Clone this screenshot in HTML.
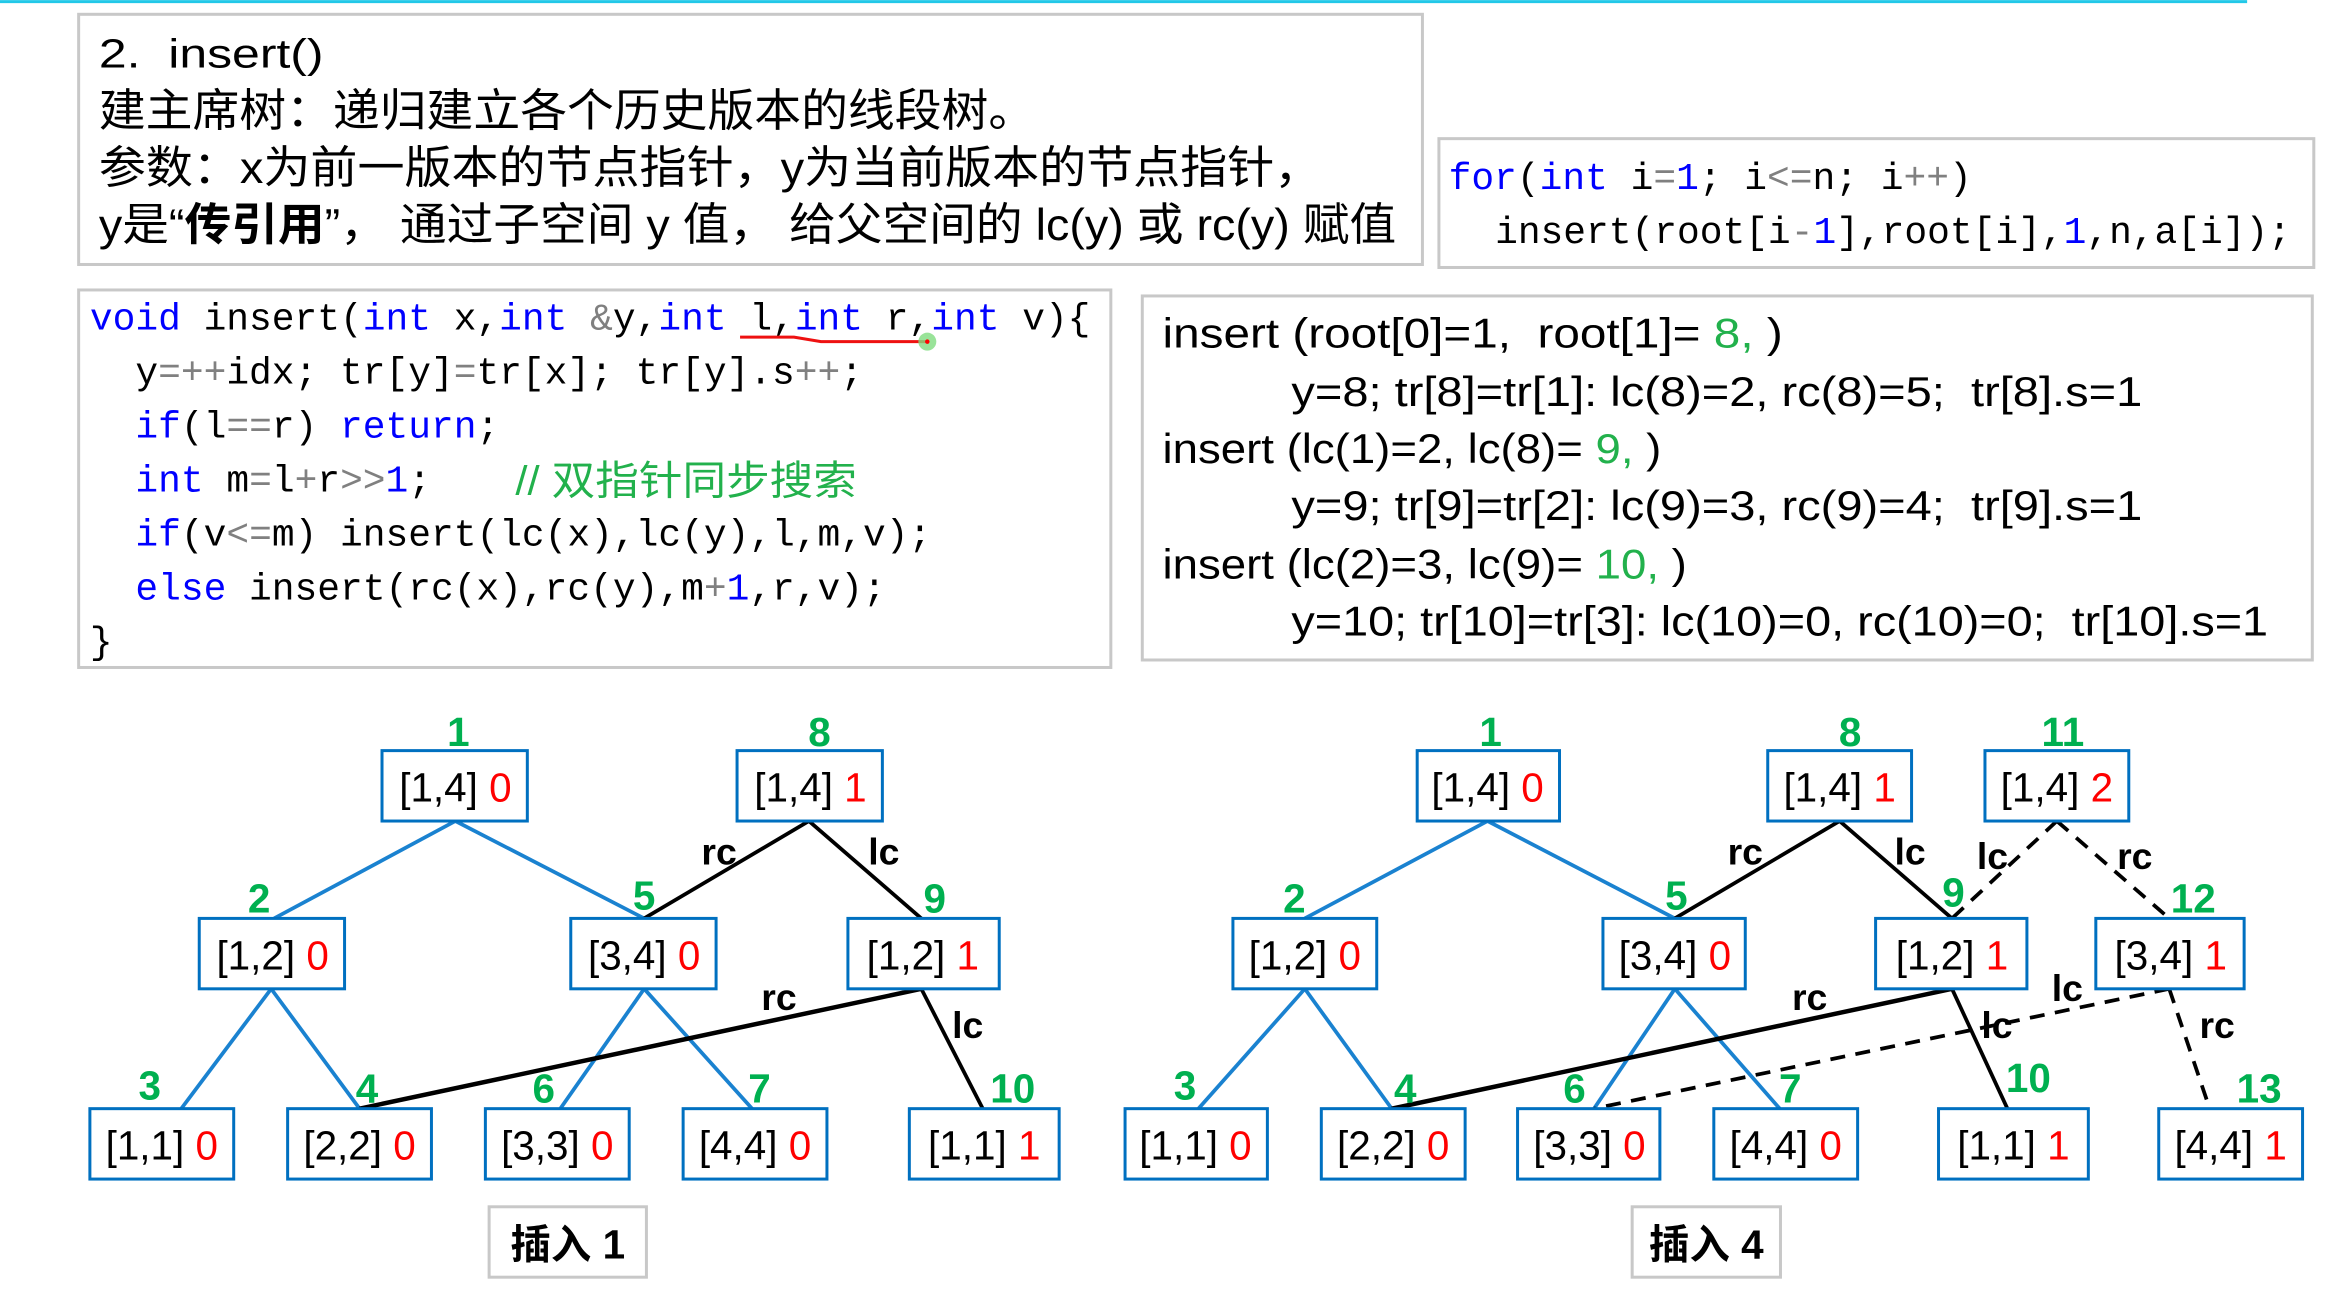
<!DOCTYPE html>
<html><head><meta charset="utf-8"><style>
html,body{margin:0;padding:0;background:#fff;}
svg{display:block;}
text{white-space:pre;}
.s{font-family:"Liberation Sans","Noto Sans CJK SC",sans-serif;}
.m{font-family:"Liberation Mono","DejaVu Sans Mono",monospace;font-size:25.3px;}
.k{fill:#0000ff}.o{fill:#808080}.c{fill:#22b14c}
.bx{fill:#fff;stroke:#0070c0;stroke-width:2}
.nt{font-family:"Liberation Sans",sans-serif;font-size:27px;text-anchor:middle;}
.g{font-family:"Liberation Sans",sans-serif;font-size:27px;fill:#00b050;text-anchor:middle;font-weight:bold}
.lb{font-family:"Liberation Sans",sans-serif;font-size:25px;fill:#000;text-anchor:middle;font-weight:bold}
.r{fill:#ff0000}
</style></head><body>
<svg width="2349" height="1296" viewBox="0 0 1568 865" xmlns="http://www.w3.org/2000/svg">
<rect x="0" y="0" width="1568" height="865" fill="#fff"/>
<line x1="0" y1="1" x2="1500" y2="1" stroke="#22c8e8" stroke-width="2"/>

<!-- box 1 -->
<rect x="52.5" y="9.5" width="897" height="167" fill="#fff" stroke="#c8c8c8" stroke-width="2"/>
<text class="s" x="66" y="45" font-size="27" textLength="150" lengthAdjust="spacingAndGlyphs">2.  insert()</text>
<text class="s" x="66" y="84" font-size="30" textLength="625" lengthAdjust="spacingAndGlyphs">建主席树：递归建立各个历史版本的线段树。</text>
<text class="s" x="66" y="122" font-size="30" textLength="816" lengthAdjust="spacingAndGlyphs">参数：x为前一版本的节点指针，y为当前版本的节点指针，</text>
<text class="s" x="66" y="160" font-size="30" textLength="866" lengthAdjust="spacingAndGlyphs">y是“<tspan font-weight="bold">传引用</tspan>”， 通过子空间 y 值， 给父空间的 lc(y) 或 rc(y) 赋值</text>

<!-- for box -->
<rect x="960.5" y="92.5" width="584" height="86" fill="#fff" stroke="#c8c8c8" stroke-width="2"/>
<text class="m" x="967" y="126"><tspan class="k">for</tspan>(<tspan class="k">int</tspan> i<tspan class="o">=</tspan><tspan class="k">1</tspan>; i<tspan class="o">&lt;=</tspan>n; i<tspan class="o">++</tspan>)</text>
<text class="m" x="998" y="162">insert(root[i<tspan class="o">-</tspan><tspan class="k">1</tspan>],root[i],<tspan class="k">1</tspan>,n,a[i]);</text>

<!-- code box -->
<rect x="52.5" y="193.5" width="689" height="252" fill="#fff" stroke="#c8c8c8" stroke-width="2"/>
<text class="m" x="60" y="220"><tspan class="k">void</tspan> insert(<tspan class="k">int</tspan> x,<tspan class="k">int</tspan> <tspan class="o">&amp;</tspan>y,<tspan class="k">int</tspan> l,<tspan class="k">int</tspan> r,<tspan class="k">int</tspan> v){</text>
<text class="m" x="60" y="256">  y<tspan class="o">=++</tspan>idx; tr[y]<tspan class="o">=</tspan>tr[x]; tr[y].s<tspan class="o">++</tspan>;</text>
<text class="m" x="60" y="292">  <tspan class="k">if</tspan>(l<tspan class="o">==</tspan>r) <tspan class="k">return</tspan>;</text>
<text class="m" x="60" y="328">  <tspan class="k">int</tspan> m<tspan class="o">=</tspan>l<tspan class="o">+</tspan>r<tspan class="o">&gt;&gt;</tspan><tspan class="k">1</tspan>;    </text>
<text class="s c" x="344" y="330" font-size="27" textLength="228" lengthAdjust="spacingAndGlyphs">// 双指针同步搜索</text>
<text class="m" x="60" y="364">  <tspan class="k">if</tspan>(v<tspan class="o">&lt;=</tspan>m) insert(lc(x),lc(y),l,m,v);</text>
<text class="m" x="60" y="400">  <tspan class="k">else</tspan> insert(rc(x),rc(y),m<tspan class="o">+</tspan><tspan class="k">1</tspan>,r,v);</text>
<text class="m" x="60" y="436">}</text>
<path d="M494 225 L530 225 L548 228 L618 228" stroke="#ee1111" stroke-width="2" fill="none"/>
<circle cx="619" cy="228" r="6" fill="#7fdc7f" opacity="0.8"/>
<circle cx="619" cy="228" r="1.5" fill="#f00"/>

<!-- right explanation box -->
<rect x="762.5" y="197.5" width="781" height="243" fill="#fff" stroke="#c8c8c8" stroke-width="2"/>
<g class="s" font-size="28">
<text x="776" y="232" textLength="414" lengthAdjust="spacingAndGlyphs">insert (root[0]=1,  root[1]= <tspan class="c">8, </tspan>)</text>
<text x="862" y="271" textLength="568" lengthAdjust="spacingAndGlyphs">y=8; tr[8]=tr[1]: lc(8)=2, rc(8)=5;  tr[8].s=1</text>
<text x="776" y="309" textLength="333" lengthAdjust="spacingAndGlyphs">insert (lc(1)=2, lc(8)= <tspan class="c">9, </tspan>)</text>
<text x="862" y="347" textLength="568" lengthAdjust="spacingAndGlyphs">y=9; tr[9]=tr[2]: lc(9)=3, rc(9)=4;  tr[9].s=1</text>
<text x="776" y="386" textLength="350" lengthAdjust="spacingAndGlyphs">insert (lc(2)=3, lc(9)= <tspan class="c">10, </tspan>)</text>
<text x="862" y="424" textLength="652" lengthAdjust="spacingAndGlyphs">y=10; tr[10]=tr[3]: lc(10)=0, rc(10)=0;  tr[10].s=1</text>
</g>

<!-- LEFT TREE edges -->
<g stroke="#1a82d0" stroke-width="2.5" fill="none">
<line x1="304" y1="548" x2="183" y2="613"/><line x1="304" y1="548" x2="430" y2="613"/>
<line x1="181" y1="660" x2="121" y2="740"/><line x1="181" y1="660" x2="240" y2="740"/>
<line x1="430" y1="660" x2="374" y2="740"/><line x1="430" y1="660" x2="502" y2="740"/>
</g>
<g stroke="#000" stroke-width="2.5" fill="none">
<line x1="540" y1="548" x2="430" y2="613"/><line x1="540" y1="548" x2="615" y2="613"/>
<line x1="615" y1="660" x2="240" y2="740" stroke-width="3"/><line x1="615" y1="660" x2="656" y2="740"/>
</g>
<text class="lb" x="480" y="577">rc</text><text class="lb" x="590" y="577">lc</text>
<text class="lb" x="520" y="674">rc</text><text class="lb" x="646" y="693">lc</text>

<!-- left tree nodes -->
<g>
<rect class="bx" x="255" y="501" width="97" height="47"/><text class="nt" x="304" y="535">[1,4] <tspan class="r">0</tspan></text>
<rect class="bx" x="492" y="501" width="97" height="47"/><text class="nt" x="541" y="535">[1,4] <tspan class="r">1</tspan></text>
<rect class="bx" x="133" y="613" width="97" height="47"/><text class="nt" x="182" y="647">[1,2] <tspan class="r">0</tspan></text>
<rect class="bx" x="381" y="613" width="97" height="47"/><text class="nt" x="430" y="647">[3,4] <tspan class="r">0</tspan></text>
<rect class="bx" x="566" y="613" width="101" height="47"/><text class="nt" x="616" y="647">[1,2] <tspan class="r">1</tspan></text>
<rect class="bx" x="60" y="740" width="96" height="47"/><text class="nt" x="108" y="774">[1,1] <tspan class="r">0</tspan></text>
<rect class="bx" x="192" y="740" width="96" height="47"/><text class="nt" x="240" y="774">[2,2] <tspan class="r">0</tspan></text>
<rect class="bx" x="324" y="740" width="96" height="47"/><text class="nt" x="372" y="774">[3,3] <tspan class="r">0</tspan></text>
<rect class="bx" x="456" y="740" width="96" height="47"/><text class="nt" x="504" y="774">[4,4] <tspan class="r">0</tspan></text>
<rect class="bx" x="607" y="740" width="100" height="47"/><text class="nt" x="657" y="774">[1,1] <tspan class="r">1</tspan></text>
</g>
<g class="g">
<text x="306" y="498">1</text><text x="547" y="498">8</text>
<text x="173" y="609">2</text><text x="430" y="607">5</text><text x="624" y="609">9</text>
<text x="100" y="734">3</text><text x="245" y="736">4</text><text x="363" y="736">6</text><text x="507" y="736">7</text><text x="676" y="736">10</text>
</g>
<rect x="326.5" y="805.5" width="105" height="47" fill="#fff" stroke="#c8c8c8" stroke-width="2"/>
<text class="s" x="379" y="840" font-size="27" font-weight="bold" text-anchor="middle">插入 1</text>

<!-- RIGHT TREE edges -->
<g stroke="#1a82d0" stroke-width="2.5" fill="none">
<line x1="993" y1="548" x2="871" y2="613"/><line x1="993" y1="548" x2="1118" y2="613"/>
<line x1="871" y1="660" x2="800" y2="740"/><line x1="871" y1="660" x2="929" y2="740"/>
<line x1="1118" y1="660" x2="1064" y2="740"/><line x1="1118" y1="660" x2="1188" y2="740"/>
</g>
<g stroke="#000" stroke-width="2.5" fill="none">
<line x1="1228" y1="548" x2="1118" y2="613"/><line x1="1228" y1="548" x2="1303" y2="613"/>
<line x1="1303" y1="660" x2="929" y2="740" stroke-width="3"/><line x1="1303" y1="660" x2="1340" y2="740"/>
</g>
<g stroke="#000" stroke-width="2.5" fill="none" stroke-dasharray="10,7">
<line x1="1373" y1="548" x2="1303" y2="613"/><line x1="1373" y1="548" x2="1448" y2="613"/>
<line x1="1448" y1="660" x2="1064" y2="740"/><line x1="1448" y1="660" x2="1475" y2="740"/>
</g>
<text class="lb" x="1165" y="577">rc</text><text class="lb" x="1275" y="577">lc</text>
<text class="lb" x="1330" y="580">lc</text><text class="lb" x="1425" y="580">rc</text>
<text class="lb" x="1208" y="674">rc</text><text class="lb" x="1380" y="668">lc</text>
<text class="lb" x="1333" y="693">lc</text><text class="lb" x="1480" y="693">rc</text>

<g>
<rect class="bx" x="946" y="501" width="95" height="47"/><text class="nt" x="993" y="535">[1,4] <tspan class="r">0</tspan></text>
<rect class="bx" x="1180" y="501" width="96" height="47"/><text class="nt" x="1228" y="535">[1,4] <tspan class="r">1</tspan></text>
<rect class="bx" x="1325" y="501" width="96" height="47"/><text class="nt" x="1373" y="535">[1,4] <tspan class="r">2</tspan></text>
<rect class="bx" x="823" y="613" width="96" height="47"/><text class="nt" x="871" y="647">[1,2] <tspan class="r">0</tspan></text>
<rect class="bx" x="1070" y="613" width="95" height="47"/><text class="nt" x="1118" y="647">[3,4] <tspan class="r">0</tspan></text>
<rect class="bx" x="1252" y="613" width="101" height="47"/><text class="nt" x="1303" y="647">[1,2] <tspan class="r">1</tspan></text>
<rect class="bx" x="1399" y="613" width="99" height="47"/><text class="nt" x="1449" y="647">[3,4] <tspan class="r">1</tspan></text>
<rect class="bx" x="751" y="740" width="95" height="47"/><text class="nt" x="798" y="774">[1,1] <tspan class="r">0</tspan></text>
<rect class="bx" x="882" y="740" width="96" height="47"/><text class="nt" x="930" y="774">[2,2] <tspan class="r">0</tspan></text>
<rect class="bx" x="1013" y="740" width="95" height="47"/><text class="nt" x="1061" y="774">[3,3] <tspan class="r">0</tspan></text>
<rect class="bx" x="1144" y="740" width="96" height="47"/><text class="nt" x="1192" y="774">[4,4] <tspan class="r">0</tspan></text>
<rect class="bx" x="1294" y="740" width="100" height="47"/><text class="nt" x="1344" y="774">[1,1] <tspan class="r">1</tspan></text>
<rect class="bx" x="1441" y="740" width="96" height="47"/><text class="nt" x="1489" y="774">[4,4] <tspan class="r">1</tspan></text>
</g>
<g class="g">
<text x="995" y="498">1</text><text x="1235" y="498">8</text><text x="1377" y="498">11</text>
<text x="864" y="609">2</text><text x="1119" y="607">5</text><text x="1304" y="605">9</text><text x="1464" y="609">12</text>
<text x="791" y="734">3</text><text x="938" y="736">4</text><text x="1051" y="736">6</text><text x="1195" y="736">7</text><text x="1354" y="729">10</text><text x="1508" y="736">13</text>
</g>
<rect x="1089.5" y="805.5" width="99" height="47" fill="#fff" stroke="#c8c8c8" stroke-width="2"/>
<text class="s" x="1139" y="840" font-size="27" font-weight="bold" text-anchor="middle">插入 4</text>
</svg>
</body></html>
